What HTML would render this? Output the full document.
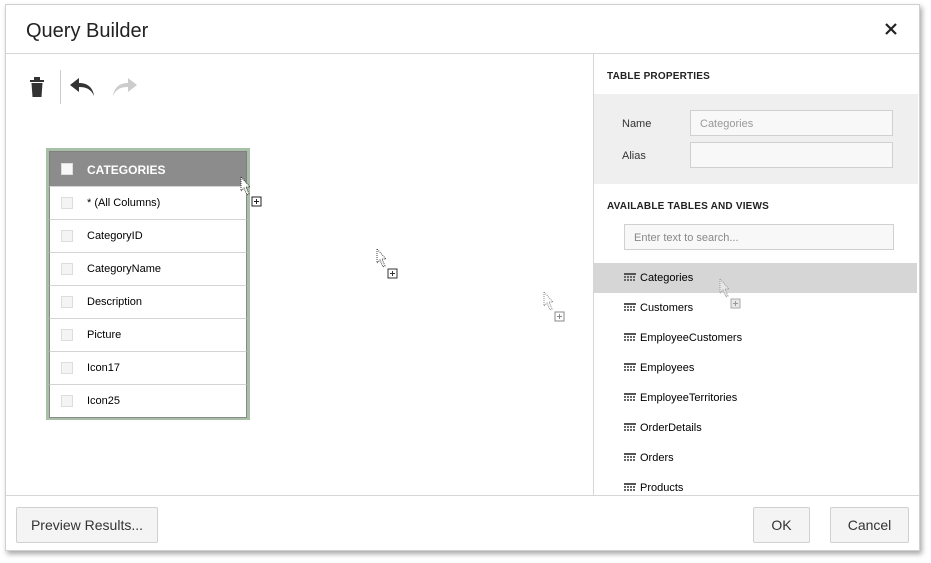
<!DOCTYPE html>
<html><head><style>
*{box-sizing:border-box;margin:0;padding:0}
body{width:931px;height:563px;background:#fff;position:relative;overflow:hidden;font-family:"Liberation Sans",Arial,sans-serif}
.dlg{position:absolute;left:5px;top:4px;width:915px;height:547px;background:#fff;border:1px solid #d0d0d0;box-shadow:2px 3px 5px rgba(0,0,0,.35)}
.abs{position:absolute}
.title{left:20px;top:15px;font-size:20px;color:#222;font-family:"Liberation Sans",sans-serif}
.hl{left:0;width:913px;height:1px;background:#d6d6d6}
.tbl{left:40px;top:143px;width:204px;height:272px;border:3px solid #a8c0a8;background:#fff}
.th{height:35px;background:#8c8c8c;color:#fff;font-weight:bold;font-size:12px;position:relative;border:1px solid #808080;border-bottom:none}
.th .cb{position:absolute;left:11px;top:11px;width:12px;height:12px;background:#f8f8f8;border:1px solid #ddd}
.th span{position:absolute;left:37px;top:11px}
.row{height:33px;border-top:1px solid #d4d4d4;position:relative;font-size:11px;color:#000;border-left:1px solid #888;border-right:1px solid #888}
.row .cb{position:absolute;left:11px;top:10px;width:12px;height:12px;background:#f4f4f4;border:1px solid #ddd}
.row span{position:absolute;left:37px;top:10px}
.sec{font-size:10px;font-weight:bold;color:#222;letter-spacing:.2px}
.lbl{font-size:11px;color:#333}
.inp{border:1px solid #d0d0d0;background:#f8f8f8;height:26px;font-size:11px;color:#999;padding:7px 9px}
.li{left:588px;width:323px;height:30px;font-size:11px;color:#000}
.li svg{position:absolute;left:30px;top:10px}
.li span{position:absolute;left:46px;top:9px}
.btn{border:1px solid #d0d0d0;border-radius:2px;background:#f4f4f4;font-size:14px;color:#333;text-align:center;line-height:34px;height:36px;font-family:"Liberation Sans",sans-serif}
</style></head><body>
<div class="dlg">
<div class="abs title">Query Builder</div>
<svg class="abs" style="left:878px;top:17px" width="14" height="14"><path d="M2 2L12 12M12 2L2 12" stroke="#222" stroke-width="2.2"/></svg>
<div class="abs hl" style="top:48px"></div>
<div class="abs hl" style="top:490px"></div>
<div class="abs" style="left:587px;top:49px;width:1px;height:441px;background:#d6d6d6"></div>
<svg class="abs" style="left:24px;top:72px" width="14" height="20"><rect x="0" y="3" width="14" height="2" fill="#333"/><rect x="4" y="0" width="6" height="3" fill="#333"/><path d="M1.5 6H12.5L11.5 20H2.5Z" fill="#333"/></svg>
<div class="abs" style="left:54px;top:65px;width:1px;height:34px;background:#ccc"></div>
<svg class="abs" style="left:63px;top:72px" width="28" height="20"><path d="M10 1L1 8L10 15V10C17 10 22 12 25 19C24 11 19 6 10 6Z" fill="#333"/></svg>
<svg class="abs" style="left:104px;top:72px" width="28" height="20"><path d="M18 1L27 8L18 15V10C11 10 6 12 3 19C4 11 9 6 18 6Z" fill="#ccc"/></svg>
<div class="abs tbl">
<div class="th"><div class="cb"></div><span>CATEGORIES</span></div>
<div class="row"><div class="cb"></div><span>* (All Columns)</span></div>
<div class="row"><div class="cb"></div><span>CategoryID</span></div>
<div class="row"><div class="cb"></div><span>CategoryName</span></div>
<div class="row"><div class="cb"></div><span>Description</span></div>
<div class="row"><div class="cb"></div><span>Picture</span></div>
<div class="row"><div class="cb"></div><span>Icon17</span></div>
<div class="row" style="border-bottom:1px solid #888;height:34px"><div class="cb"></div><span>Icon25</span></div>
</div>
<svg class="abs" style="left:234px;top:171px" width="24" height="32"><path d="M1 1V15L4 12L7 19L9 18L6 11H10Z" fill="#fff" stroke="#333" stroke-dasharray="1 1"/><rect x="12" y="21" width="9" height="9" fill="#fff" stroke="#222"/><path d="M14 25.5H19M16.5 23V28" stroke="#222"/></svg>
<svg class="abs" style="left:370px;top:243px" width="24" height="32"><path d="M1 1V15L4 12L7 19L9 18L6 11H10Z" fill="#fff" stroke="#444" stroke-dasharray="1 1"/><rect x="12" y="21" width="9" height="9" fill="#fff" stroke="#333"/><path d="M14 25.5H19M16.5 23V28" stroke="#333"/></svg>
<svg class="abs" style="left:537px;top:286px" width="24" height="32"><path d="M1 1V15L4 12L7 19L9 18L6 11H10Z" fill="#fff" stroke="#888" stroke-dasharray="1 1"/><rect x="12" y="21" width="9" height="9" fill="#fff" stroke="#888"/><path d="M14 25.5H19M16.5 23V28" stroke="#888"/></svg>
<div class="abs sec" style="left:601px;top:66px">TABLE PROPERTIES</div>
<div class="abs" style="left:588px;top:89px;width:324px;height:90px;background:#efefef"></div>
<div class="abs lbl" style="left:616px;top:113px">Name</div>
<div class="abs inp" style="left:684px;top:105px;width:203px">Categories</div>
<div class="abs lbl" style="left:616px;top:145px">Alias</div>
<div class="abs inp" style="left:684px;top:137px;width:203px"></div>
<div class="abs sec" style="left:601px;top:196px">AVAILABLE TABLES AND VIEWS</div>
<div class="abs inp" style="left:618px;top:219px;width:270px;color:#888">Enter text to search...</div>
<div class="abs" style="left:588px;top:258px;width:323px;height:30px;background:#d6d6d6"></div>
<div class="abs li" style="top:258px"><svg width="12" height="10"><rect width="12" height="2" fill="#555"/><g fill="#666"><rect x="0" y="3" width="2" height="2"/><rect x="3" y="3" width="2" height="2"/><rect x="6" y="3" width="2" height="2"/><rect x="9" y="3" width="2" height="2"/><rect x="0" y="6" width="2" height="2"/><rect x="3" y="6" width="2" height="2"/><rect x="6" y="6" width="2" height="2"/><rect x="9" y="6" width="2" height="2"/></g></svg><span>Categories</span></div>
<div class="abs li" style="top:288px"><svg width="12" height="10"><rect width="12" height="2" fill="#555"/><g fill="#666"><rect x="0" y="3" width="2" height="2"/><rect x="3" y="3" width="2" height="2"/><rect x="6" y="3" width="2" height="2"/><rect x="9" y="3" width="2" height="2"/><rect x="0" y="6" width="2" height="2"/><rect x="3" y="6" width="2" height="2"/><rect x="6" y="6" width="2" height="2"/><rect x="9" y="6" width="2" height="2"/></g></svg><span>Customers</span></div>
<div class="abs li" style="top:318px"><svg width="12" height="10"><rect width="12" height="2" fill="#555"/><g fill="#666"><rect x="0" y="3" width="2" height="2"/><rect x="3" y="3" width="2" height="2"/><rect x="6" y="3" width="2" height="2"/><rect x="9" y="3" width="2" height="2"/><rect x="0" y="6" width="2" height="2"/><rect x="3" y="6" width="2" height="2"/><rect x="6" y="6" width="2" height="2"/><rect x="9" y="6" width="2" height="2"/></g></svg><span>EmployeeCustomers</span></div>
<div class="abs li" style="top:348px"><svg width="12" height="10"><rect width="12" height="2" fill="#555"/><g fill="#666"><rect x="0" y="3" width="2" height="2"/><rect x="3" y="3" width="2" height="2"/><rect x="6" y="3" width="2" height="2"/><rect x="9" y="3" width="2" height="2"/><rect x="0" y="6" width="2" height="2"/><rect x="3" y="6" width="2" height="2"/><rect x="6" y="6" width="2" height="2"/><rect x="9" y="6" width="2" height="2"/></g></svg><span>Employees</span></div>
<div class="abs li" style="top:378px"><svg width="12" height="10"><rect width="12" height="2" fill="#555"/><g fill="#666"><rect x="0" y="3" width="2" height="2"/><rect x="3" y="3" width="2" height="2"/><rect x="6" y="3" width="2" height="2"/><rect x="9" y="3" width="2" height="2"/><rect x="0" y="6" width="2" height="2"/><rect x="3" y="6" width="2" height="2"/><rect x="6" y="6" width="2" height="2"/><rect x="9" y="6" width="2" height="2"/></g></svg><span>EmployeeTerritories</span></div>
<div class="abs li" style="top:408px"><svg width="12" height="10"><rect width="12" height="2" fill="#555"/><g fill="#666"><rect x="0" y="3" width="2" height="2"/><rect x="3" y="3" width="2" height="2"/><rect x="6" y="3" width="2" height="2"/><rect x="9" y="3" width="2" height="2"/><rect x="0" y="6" width="2" height="2"/><rect x="3" y="6" width="2" height="2"/><rect x="6" y="6" width="2" height="2"/><rect x="9" y="6" width="2" height="2"/></g></svg><span>OrderDetails</span></div>
<div class="abs li" style="top:438px"><svg width="12" height="10"><rect width="12" height="2" fill="#555"/><g fill="#666"><rect x="0" y="3" width="2" height="2"/><rect x="3" y="3" width="2" height="2"/><rect x="6" y="3" width="2" height="2"/><rect x="9" y="3" width="2" height="2"/><rect x="0" y="6" width="2" height="2"/><rect x="3" y="6" width="2" height="2"/><rect x="6" y="6" width="2" height="2"/><rect x="9" y="6" width="2" height="2"/></g></svg><span>Orders</span></div>
<div class="abs li" style="top:468px;height:22px;overflow:hidden"><svg width="12" height="10"><rect width="12" height="2" fill="#555"/><g fill="#666"><rect x="0" y="3" width="2" height="2"/><rect x="3" y="3" width="2" height="2"/><rect x="6" y="3" width="2" height="2"/><rect x="9" y="3" width="2" height="2"/><rect x="0" y="6" width="2" height="2"/><rect x="3" y="6" width="2" height="2"/><rect x="6" y="6" width="2" height="2"/><rect x="9" y="6" width="2" height="2"/></g></svg><span>Products</span></div>
<svg class="abs" style="left:713px;top:273px" width="24" height="32"><path d="M1 1V15L4 12L7 19L9 18L6 11H10Z" fill="#e6e6e6" stroke="#999" stroke-dasharray="1 1"/><rect x="12" y="21" width="9" height="9" fill="#e8e8e8" stroke="#aaa"/><path d="M14 25.5H19M16.5 23V28" stroke="#999"/></svg>
<div class="abs btn" style="left:10px;top:502px;width:142px">Preview Results...</div>
<div class="abs btn" style="left:747px;top:502px;width:57px">OK</div>
<div class="abs btn" style="left:824px;top:502px;width:79px">Cancel</div>
</div>
</body></html>
